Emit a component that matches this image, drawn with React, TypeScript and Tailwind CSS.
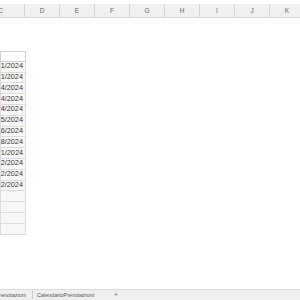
const columns = ['C', 'D', 'E', 'F', 'G', 'H', 'I', 'J', 'K'];

const dates = [
  '15/01/2024',
  '22/01/2024',
  '03/04/2024',
  '10/04/2024',
  '24/04/2024',
  '08/05/2024',
  '12/06/2024',
  '20/08/2024',
  '05/11/2024',
  '02/12/2024',
  '09/12/2024',
  '16/12/2024',
];

export default function App() {
  return (
    <div
      className="w-[300px] h-[300px] bg-white overflow-hidden flex flex-col"
      style={{ fontFamily: '"Liberation Sans", Arial, sans-serif' }}
    >
      {/* column headers */}
      <div className="mt-[4px] h-[14px] flex bg-[#f0f0f0] border-b border-[#d9d9d9] shrink-0">
        {columns.map((c, i) => (
          <div
            key={c}
            className={`${i === 0 ? 'w-[48px] ml-[-23px]' : 'w-[35px]'} shrink-0 flex items-center justify-center text-[6.5px] text-[#666] border-r border-[#d4d4d4]`}
          >
            {c}
          </div>
        ))}
      </div>

      {/* sheet body */}
      <div className="flex-1 flex flex-col">
        <div className="h-[33px]" />
        <div className="w-[26px] flex flex-col">
          <div className="h-[10.8px] bg-white border border-[#d0d0d0]" />
          {dates.map((d, i) => (
            <div
              key={i}
              className="h-[10.8px] flex items-center justify-end overflow-hidden whitespace-nowrap pr-[2px] bg-[#f9f9f9] border-x border-b border-[#dcdcdc] text-[7.3px] text-[#333]"
            >
              {d}
            </div>
          ))}
          {[0, 1, 2, 3].map((i) => (
            <div key={i} className="h-[10.8px] bg-[#f7f7f7] border-x border-b border-[#dcdcdc]" />
          ))}
        </div>
      </div>

      {/* sheet tabs */}
      <div className="h-[11px] shrink-0 flex items-center bg-[#efefef] border-t border-[#dadada] text-[5.5px] text-[#555]">
        <div className="w-[33px] flex justify-end pr-[6px] overflow-hidden whitespace-nowrap border-r border-[#c8c8c8]">
          Prenotazioni
        </div>
        <div className="pl-[4px] w-[70px] whitespace-nowrap">CalendarioPrenotazioni</div>
        <div className="ml-[11px] text-[7px] text-[#777]">+</div>
      </div>
    </div>
  );
}
